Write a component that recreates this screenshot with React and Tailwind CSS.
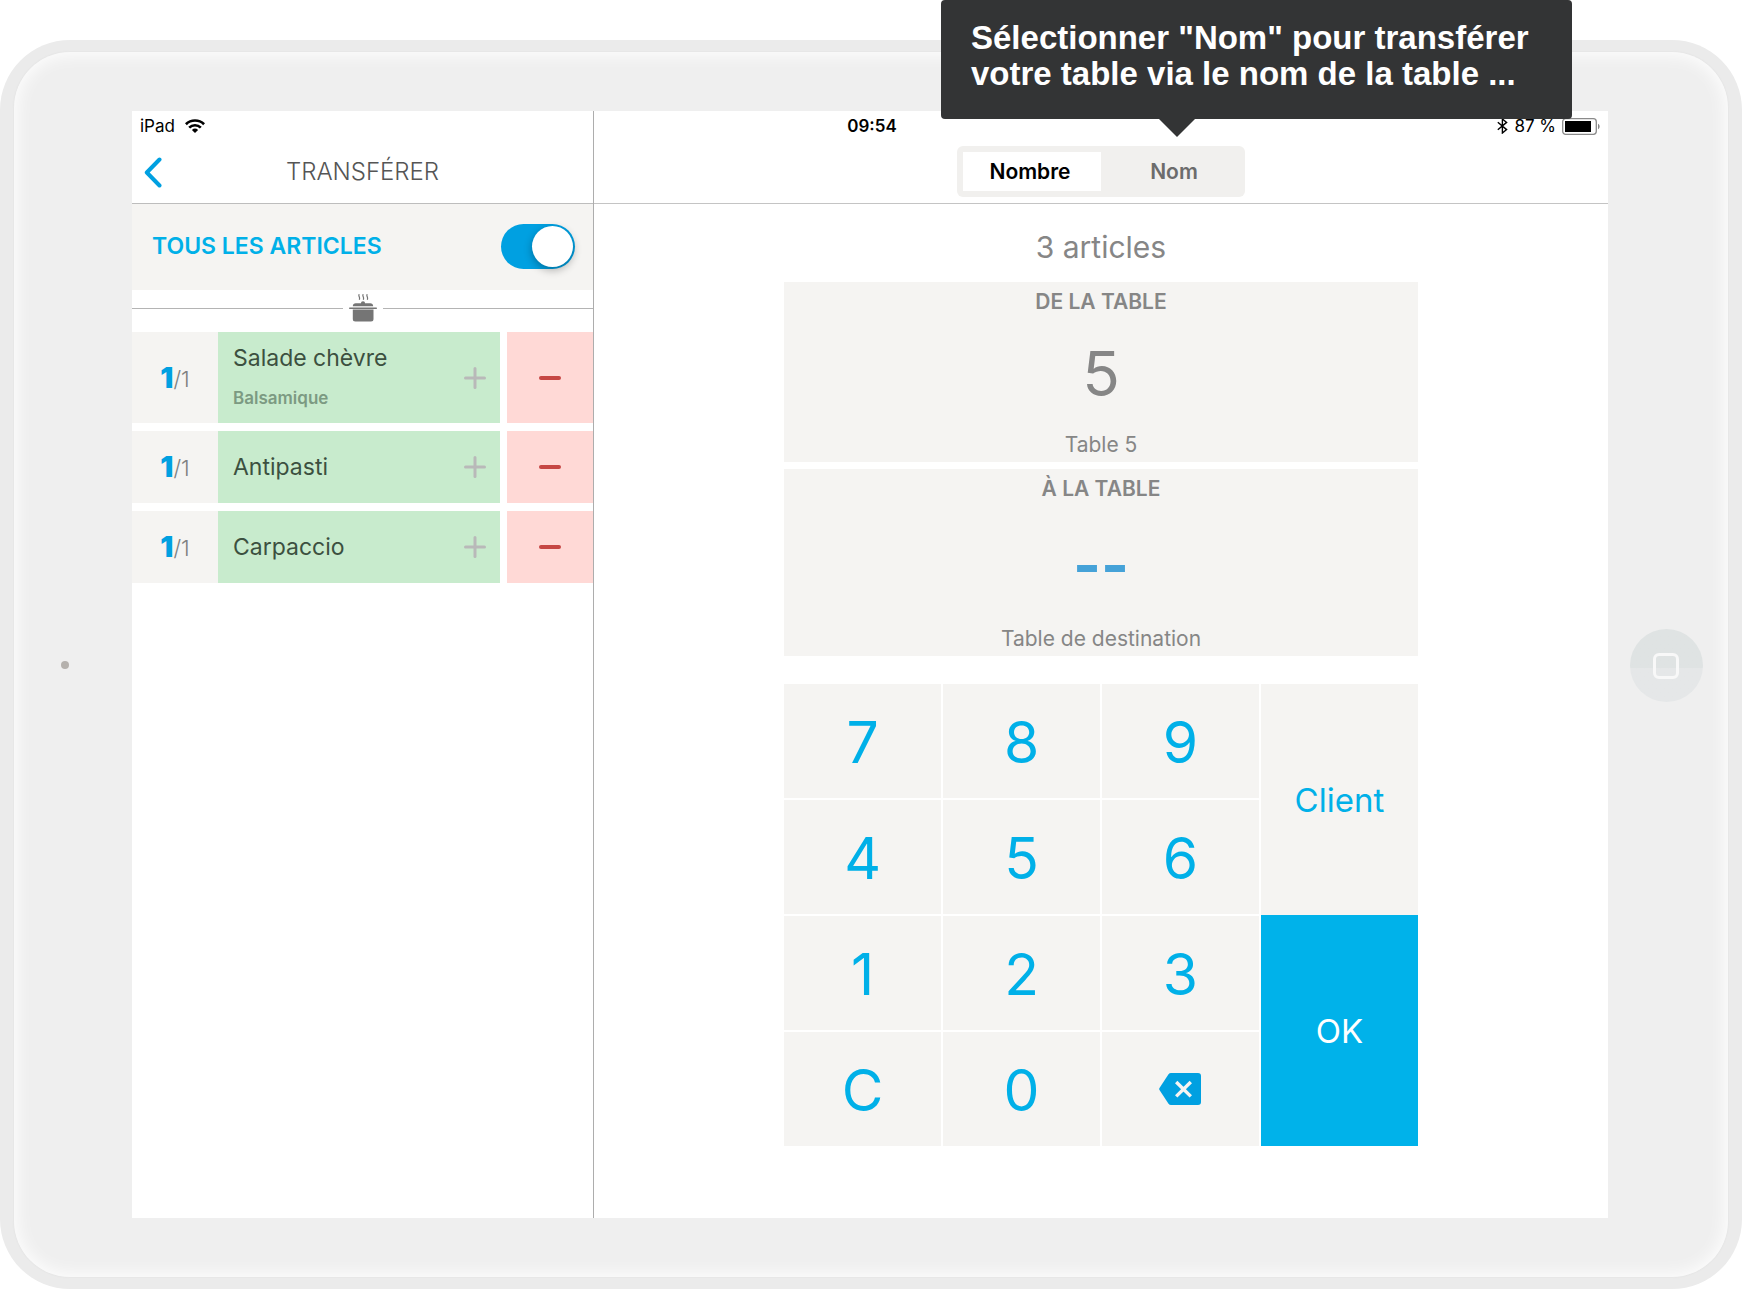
import { useState } from "react";

const ITEMS = [
  { name: "Salade chèvre", note: "Balsamique", count: 1, total: 1 },
  { name: "Antipasti", count: 1, total: 1 },
  { name: "Carpaccio", count: 1, total: 1 },
];

function WifiIcon() {
  return (
    <svg viewBox="0 0 20 14" className="h-[14px] w-5" fill="none" stroke="#000" strokeWidth="2.7" aria-hidden="true">
      <path d="M0.9 5.2a13 13 0 0 1 18.2 0" />
      <path d="M4.2 8.6a8.3 8.3 0 0 1 11.6 0" />
      <path d="M10 14 6.9 10.9a4.5 4.5 0 0 1 6.2 0Z" fill="#000" stroke="none" />
    </svg>
  );
}

function BluetoothIcon() {
  return (
    <svg viewBox="0 0 11 16" className="h-4 w-[11px]" fill="none" stroke="#000" strokeWidth="1.4" aria-hidden="true">
      <path d="M0.8 4.2 9.6 11.6 5.4 15V1L9.6 4.4 0.8 11.8" />
    </svg>
  );
}

function BatteryIcon() {
  return (
    <svg viewBox="0 0 38 17" className="h-[17px] w-[38px]" aria-hidden="true">
      <rect x="0.7" y="0.7" width="33.6" height="15.6" rx="3" fill="#fff" stroke="#8a8a8a" strokeWidth="1.3" />
      <rect x="3" y="3" width="26" height="11" fill="#000" />
      <path d="M36 5.8c2.2 1 2.2 4.4 0 5.4Z" fill="#8a8a8a" />
    </svg>
  );
}

function ChevronLeft() {
  return (
    <svg viewBox="0 0 18 31" className="h-[31px] w-[18px]" fill="none" stroke="#00a0e1" strokeWidth="4" strokeLinecap="round" strokeLinejoin="round" aria-hidden="true">
      <path d="M15.5 2.5 2.8 15.5l12.7 13" />
    </svg>
  );
}

function PotIcon() {
  return (
    <svg viewBox="0 0 28 28" className="size-7" fill="#757575" aria-hidden="true">
      <g fill="none" stroke="#757575" strokeWidth="1.2">
        <path d="M10.3 0.2c-1.6 1.8 1.2 2.6 0 5.6" />
        <path d="M14.3 0.2c-1.6 1.8 1.2 2.6 0 5.6" />
        <path d="M18.3 0.2c-1.6 1.8 1.2 2.6 0 5.6" />
      </g>
      <path d="M3.8 12.2c0-2 1.2-3 3-3h5.2c0-1.3.6-2 2-2s2 .7 2 2h5.2c1.8 0 3 1 3 3Z" />
      <rect x="0" y="13.4" width="28" height="1.5" rx="0.7" />
      <path d="M3.8 15.5h20.7v9.5q0 2.5-2.5 2.5H6.3q-2.5 0-2.5-2.5Z" />
    </svg>
  );
}

function BackspaceIcon() {
  return (
    <svg viewBox="0 0 42 32" className="h-8 w-[42px]" aria-hidden="true">
      <path d="M12 0H39a3 3 0 0 1 3 3V29a3 3 0 0 1-3 3H12q-1.6 0-2.5-1.3L0.5 17q-.6-1 0-2L9.5 1.3Q10.4 0 12 0Z" fill="#00a0e1" />
      <path d="M17.2 9 31.8 23.4M31.8 9 17.2 23.4" stroke="#f5f4f2" strokeWidth="3.4" />
    </svg>
  );
}

function StatusBar() {
  return (
    <div className="absolute inset-x-0 top-0 grid h-[30px] grid-cols-3 items-center text-[17px] leading-5 text-black">
      <div className="flex items-center gap-2.5 pl-2">
        iPad <WifiIcon />
      </div>
      <div className="pl-1 text-center font-semibold">09:54</div>
      <div className="flex items-center justify-end gap-1.5 pr-2">
        <BluetoothIcon />
        <span>87 %</span>
        <BatteryIcon />
      </div>
    </div>
  );
}

function Item({ name, note, count, total }) {
  return (
    <li className="flex gap-[7px]">
      <div className="flex flex-1">
        <div className="flex w-[86px] items-center justify-center bg-[#f5f4f2]">
          <span className="text-[29px] leading-8 font-black text-[#00a0e1]">{count}</span>
          <span className="pt-0.5 text-[22px] leading-8 font-light text-[#808080]">/{total}</span>
        </div>
        <div className={`flex flex-1 items-center justify-between bg-[#c8ebcd] pr-3.5 pl-[15px] ${note ? "min-h-[91px]" : "min-h-[72px]"}`}>
          <div>
            <div className="text-[23px] leading-8 text-[#3c5040]">{name}</div>
            {note && <div className="mt-2 mb-1 pt-1 text-[17px] leading-6 font-semibold text-[#7c9a82]">{note}</div>}
          </div>
          <button type="button" aria-label={`Ajouter ${name}`}>
            <svg viewBox="0 0 22 22" className="size-[22px]" stroke="#b9b9b9" strokeWidth="3" strokeLinecap="round" aria-hidden="true">
              <path d="M11 1.5v19M1.5 11h19" />
            </svg>
          </button>
        </div>
      </div>
      <button type="button" aria-label={`Retirer ${name}`} className="flex w-[86px] items-center justify-center bg-[#ffd9d6]">
        <svg viewBox="0 0 22 4" className="h-1 w-[22px]" aria-hidden="true">
          <rect width="22" height="4" rx="2" fill="#c64744" />
        </svg>
      </button>
    </li>
  );
}

function ArticlesPanel() {
  const [all, setAll] = useState(true);
  return (
    <section className="border-r border-[#adadad]">
      <header className="flex h-[93px] items-center border-b border-[#bdbdbd] px-3 pt-[30px]">
        <button type="button" aria-label="Retour" className="w-8">
          <ChevronLeft />
        </button>
        <h1 className="flex-1 text-center text-2xl leading-8 font-light text-[#555]">TRANSFÉRER</h1>
        <div className="w-8" />
      </header>
      <label className="flex h-[86px] items-center justify-between bg-[#f5f4f2] pr-[18px] pb-0.5 pl-5">
        <span className="text-[23px] leading-8 font-semibold text-[#00b0e8]">TOUS LES ARTICLES</span>
        <input
          type="checkbox"
          role="switch"
          checked={all}
          onChange={(e) => setAll(e.target.checked)}
          className="flex h-[45px] w-[74px] appearance-none items-center rounded-full bg-[#c9c9c9] px-0.5 before:size-[41px] before:rounded-full before:bg-white before:shadow-[0_3px_8px_rgba(0,0,0,0.3)] checked:justify-end checked:bg-[#00a0e1]"
        />
      </label>
      <div className="flex h-[42px] items-center gap-1.5 pb-1.5">
        <div className="h-px flex-1 bg-[#b4b4b4]" />
        <PotIcon />
        <div className="h-px flex-1 bg-[#b4b4b4]" />
      </div>
      <ul className="flex flex-col gap-2">
        {ITEMS.map((item) => (
          <Item key={item.name} {...item} />
        ))}
      </ul>
    </section>
  );
}

function Tooltip() {
  return (
    <div role="tooltip" className="absolute bottom-full -left-4 z-10 mb-[27px] h-[119px] w-[631px] rounded bg-[#333435] px-[30px] pt-5 text-left font-['Liberation_Sans',Arial,sans-serif] text-[33px] leading-9 font-bold whitespace-nowrap text-white">
      Sélectionner "Nom" pour transférer
      <br />
      votre table via le nom de la table ...
      <svg viewBox="0 0 36 18" className="absolute top-full left-[218px] h-[18px] w-9" aria-hidden="true">
        <path d="M0 0H36L18 18Z" fill="#333435" />
      </svg>
    </div>
  );
}

function ModeSwitch() {
  return (
    <div className="relative">
      <div className="grid h-[51px] w-[288px] grid-cols-2 rounded-md bg-[#f1f0ee] p-1.5 text-[21px] leading-6 font-semibold">
        <button type="button" aria-pressed="true" className="bg-white pt-0.5 pr-1 text-black">Nombre</button>
        <button type="button" aria-pressed="false" className="pt-0.5 pl-2 text-[#6c6c6c]">Nom</button>
      </div>
      <Tooltip />
    </div>
  );
}

function TableCard({ title, caption, children }) {
  return (
    <div className="flex flex-col items-center justify-between bg-[#f5f4f2] text-[#868686]">
      <h2 className="pt-1 text-[21px] leading-8 font-semibold">{title}</h2>
      {children}
      <p className="pb-px text-[21px] leading-8">{caption}</p>
    </div>
  );
}

const KEYS = ["7", "8", "9", "4", "5", "6", "1", "2", "3", "C", "0"];

function Keypad() {
  return (
    <div className="grid grid-cols-4 gap-0.5">
      <div className="col-span-3 grid grid-cols-3 gap-0.5">
        {KEYS.map((key) => (
          <button key={key} type="button" className="h-[114px] bg-[#f5f4f2] pt-0.5 text-[57px] leading-none text-[#00b0e8]">
            {key}
          </button>
        ))}
        <button type="button" aria-label="Effacer" className="flex h-[114px] items-center justify-center bg-[#f5f4f2]">
          <BackspaceIcon />
        </button>
      </div>
      <div className="grid grid-rows-2">
        <button type="button" className="bg-[#f5f4f2] pt-0.5 text-[33px] text-[#00b0e8]">Client</button>
        <button type="button" className="bg-[#00b2ea] pt-0.5 text-[33px] text-white">OK</button>
      </div>
    </div>
  );
}

function TransferPanel() {
  return (
    <section>
      <header className="flex h-[93px] items-center justify-center border-b border-[#c4c4c4] pt-[28px]">
        <ModeSwitch />
      </header>
      <div className="mx-auto w-5/8">
        <p className="pt-[23px] pb-[15px] text-center text-[30px] leading-10 text-[#868686]">3 articles</p>
        <div className="grid grid-rows-[180px_187px] gap-[7px]">
          <TableCard title="DE LA TABLE" caption="Table 5">
            <div className="text-[62px] leading-none">5</div>
          </TableCard>
          <TableCard title="À LA TABLE" caption="Table de destination">
            <div className="text-[60px] leading-none font-bold text-[#45a2d8]">--</div>
          </TableCard>
        </div>
        <div className="mt-7">
          <Keypad />
        </div>
      </div>
    </section>
  );
}

export default function App() {
  return (
    <div className="flex min-h-screen flex-col bg-white pt-10 font-[Inter,'Liberation_Sans',sans-serif]">
      <div className="flex flex-1 rounded-[70px] bg-[#ebebeb] px-[14px] py-3">
        <div className="grid flex-1 grid-cols-[118px_1fr_120px] rounded-[56px] bg-[#efefef] pt-[59px] pb-[59px] shadow-[inset_0_0_18px_2px_#fff,0_0_2px_#dcdcdc]">
          <div className="flex items-center justify-center pr-4">
            <div className="size-2 rounded-full bg-[#b5b1ad]" />
          </div>
          <main className="relative grid grid-cols-[462fr_1014fr] bg-white">
            <ArticlesPanel />
            <TransferPanel />
            <StatusBar />
          </main>
          <div className="flex items-center justify-center pt-0.5 pr-1">
            <button type="button" aria-label="Accueil" className="flex size-[73px] items-center justify-center rounded-full bg-linear-to-b from-[#dfe3e3] from-54% to-[#e5e7e8] to-54%">
              <span className="size-[26px] rounded-md border-[3px] border-[#f8f8f8]" />
            </button>
          </div>
        </div>
      </div>
    </div>
  );
}
